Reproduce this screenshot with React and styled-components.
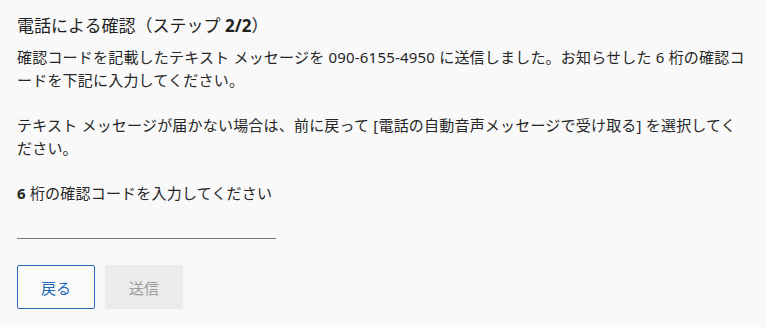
import React from 'react'
import styled, { createGlobalStyle } from 'styled-components'

const GlobalStyle = createGlobalStyle`
  html, body {
    margin: 0;
    padding: 0;
    background: #f9f9f9;
  }
  body {
    font-family: 'Noto Sans', 'Noto Sans CJK JP', sans-serif;
    color: #262626;
  }
`

const Page = styled.main`
  padding: 14px 17px 0 17px;
  width: 767px;
  box-sizing: border-box;
`

const Title = styled.h1`
  margin: 0 0 8px;
  font-size: 17px;
  font-weight: 400;
  line-height: 24px;
  color: #1f1f1f;
  b {
    font-weight: 700;
  }
`

const Text = styled.p`
  margin: 0 0 ${(p) => p.$gap ?? 22}px;
  font-size: 15px;
  line-height: 23px;
  letter-spacing: 0.2px;
  b {
    font-weight: 700;
  }
`

const Field = styled.input`
  display: block;
  width: 259px;
  height: 34px;
  box-sizing: border-box;
  padding: 0;
  margin: 0 0 26px;
  border: none;
  border-bottom: 1px solid #767676;
  background: transparent;
  outline: none;
  font: inherit;
`

const Actions = styled.div`
  display: flex;
  gap: 10px;
`

const Button = styled.button`
  width: 78px;
  height: 44px;
  box-sizing: border-box;
  border-radius: 2px;
  font-family: inherit;
  font-size: 15px;
  border: 1px solid ${(p) => (p.$primary ? '#2266b8' : '#ebebeb')};
  background: ${(p) => (p.$primary ? '#fafafa' : '#ebebeb')};
  color: ${(p) => (p.$primary ? '#2266b8' : '#9a9a9a')};
`

export default function App() {
  return (
    <>
      <GlobalStyle />
      <Page>
        <Title>
          電話による確認（ステップ <b>2/2</b>）
        </Title>
        <Text>
          確認コードを記載したテキスト メッセージを 090-6155-4950 に送信しました。お知らせした 6 桁の確認コードを下記に入力してください。
        </Text>
        <Text>
          テキスト メッセージが届かない場合は、前に戻って [電話の自動音声メッセージで受け取る] を選択してください。
        </Text>
        <Text $gap={0}>
          <b>6</b> 桁の確認コードを入力してください
        </Text>
        <Field type="text" />
        <Actions>
          <Button $primary>戻る</Button>
          <Button disabled>送信</Button>
        </Actions>
      </Page>
    </>
  )
}
